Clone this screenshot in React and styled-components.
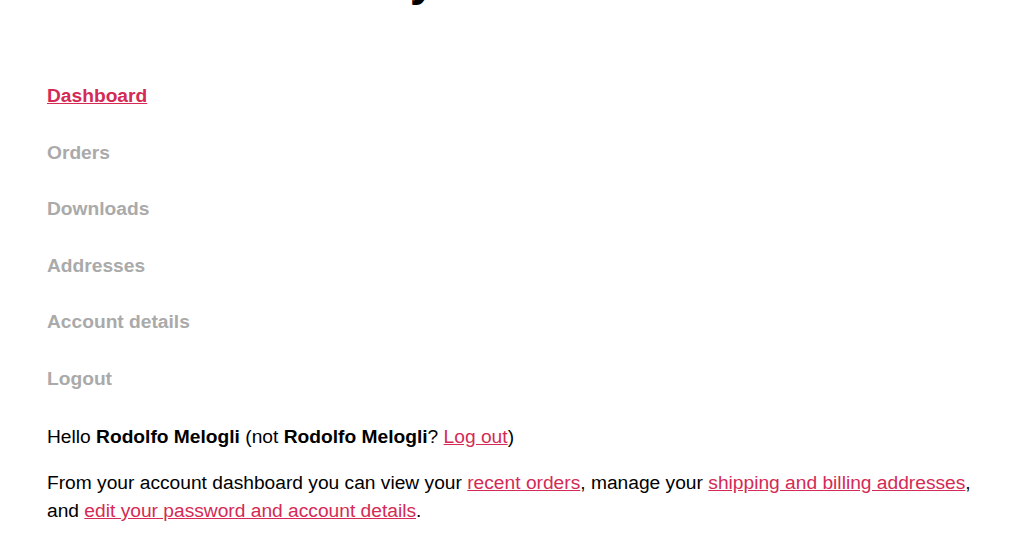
import styled, { createGlobalStyle } from "styled-components";

const GlobalStyle = createGlobalStyle`
  html, body {
    margin: 0;
    padding: 0;
    background: #fff;
    overflow: hidden;
  }
  body {
    font-family: "Liberation Sans", Arial, sans-serif;
    color: #000;
  }
`;

const COLORS = {
  link: "#d42a55",
  muted: "#aaaaaa",
  text: "#000",
};

const Page = styled.div`
  width: 1024px;
  height: 543px;
  overflow: hidden;
  padding: 0 47px;
  box-sizing: border-box;
`;

const Title = styled.h1`
  margin: -45px 0 0;
  font-size: 48px;
  line-height: 48px;
  font-weight: 700;
  text-align: center;
  padding-right: 14px;
`;

const Nav = styled.ul`
  list-style: none;
  margin: 65px 0 0;
  padding: 0;
`;

const NavItem = styled.li`
  padding: 14px 0;
  line-height: 28.5px;
  font-size: 19.2px;
  font-weight: 700;
`;

const NavLink = styled.a`
  color: ${(props) => (props.$active ? COLORS.link : COLORS.muted)};
  text-decoration: ${(props) => (props.$active ? "underline" : "none")};
`;

const Content = styled.div`
  margin-top: 16px;
  font-size: 19.2px;
  line-height: 28px;
`;

const Para = styled.p`
  margin: 0 0 18px;
`;

const Link = styled.a`
  color: ${COLORS.link};
  text-decoration: underline;
`;

const items = [
  "Dashboard",
  "Orders",
  "Downloads",
  "Addresses",
  "Account details",
  "Logout",
];

const App = () => {
  return (
    <>
      <GlobalStyle />
      <Page>
        <Title>My Account</Title>
        <Nav>
          {items.map((item, index) => (
            <NavItem key={item}>
              <NavLink href="#" $active={index === 0}>
                {item}
              </NavLink>
            </NavItem>
          ))}
        </Nav>
        <Content>
          <Para>
            Hello <strong>Rodolfo Melogli</strong> (not{" "}
            <strong>Rodolfo Melogli</strong>? <Link href="#">Log out</Link>)
          </Para>
          <Para>
            From your account dashboard you can view your{" "}
            <Link href="#">recent orders</Link>, manage your{" "}
            <Link href="#">shipping and billing addresses</Link>, and{" "}
            <Link href="#">edit your password and account details</Link>.
          </Para>
        </Content>
      </Page>
    </>
  );
};

export default App;
